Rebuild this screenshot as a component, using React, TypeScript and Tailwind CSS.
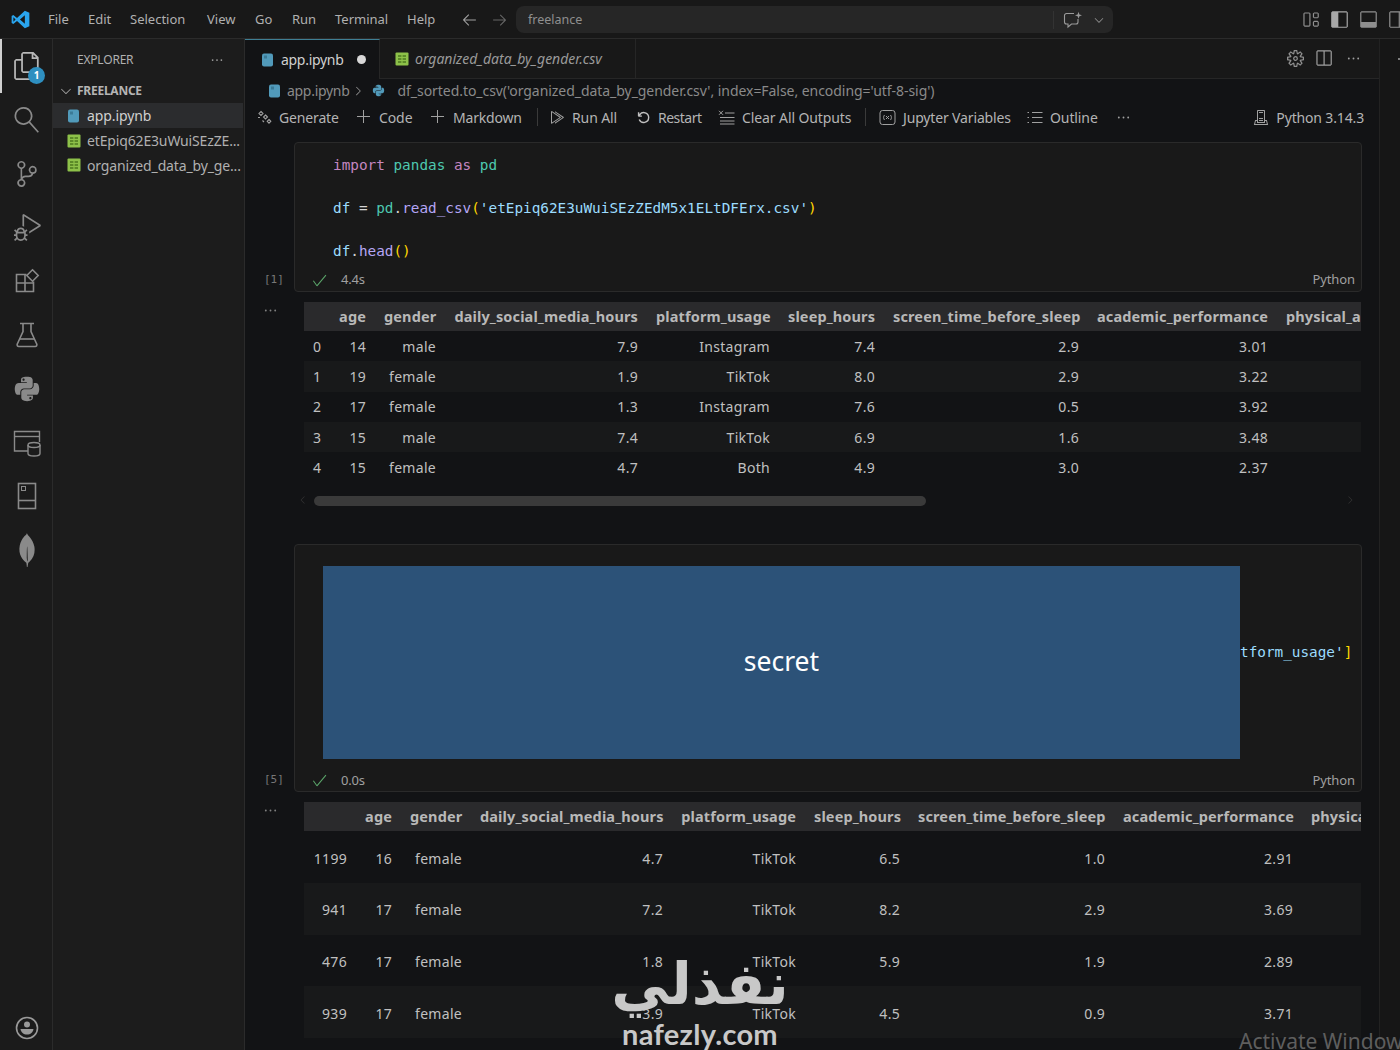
import React from "react";
import {
  VscFiles, VscSearch, VscSourceControl, VscDebugAlt, VscEllipsis, VscChevronDown,
  VscArrowLeft, VscArrowRight, VscAdd, VscRunAll, VscDebugRestart, VscSettingsGear, VscSplitHorizontal,
  VscLayout, VscLayoutSidebarLeft, VscLayoutPanel, VscLayoutSidebarRightOff, VscCheck, VscServerEnvironment,
  VscChevronLeft, VscChevronRight,
} from "react-icons/vsc";
import { FaPython } from "react-icons/fa";
import { SiMongodb } from "react-icons/si";

const ui = { fontFamily: '"Noto Sans", "Open Sans", sans-serif' };
const mono = { fontFamily: '"DejaVu Sans Mono", "Liberation Mono", monospace' };

function NotebookIcon({ size = 13 }: { size?: number }) {
  return (
    <svg width={size} height={size + 1} viewBox="0 0 13 14" className="shrink-0">
      <rect x="1" y="0.5" width="11" height="13" rx="2" fill="#519aba" />
      <rect x="3" y="2.5" width="3" height="3" fill="#3b7a96" />
    </svg>
  );
}

function CsvIcon() {
  return (
    <svg width="14" height="14" viewBox="0 0 14 14" className="shrink-0">
      <rect x="0.5" y="0.5" width="13" height="13" rx="1" fill="#8dc149" />
      <path d="M3 4h3.4M7.6 4H11M3 7h3.4M7.6 7H11M3 10h3.4M7.6 10H11" stroke="#5c8a29" strokeWidth="2" />
    </svg>
  );
}

function VsLogo() {
  return (
    <svg width="19" height="19" viewBox="0 0 24 24">
      <path d="M17.5 0.8 23.2 3.5V20.5L17.5 23.2 7.6 13.9 2.9 17.6 0.8 16.4V7.6L2.9 6.4 7.6 10.1ZM17.5 6.6 11.3 12 17.5 17.4ZM3 9.2V14.8L5.8 12Z" fill="#2aa5ee" />
    </svg>
  );
}

function ChatSparkle() {
  return (
    <svg width="20" height="18" viewBox="0 0 20 18" fill="none" stroke="#9a9a9a" strokeWidth="1.1">
      <path d="M11 2.5H3.5a2 2 0 0 0-2 2v6.5a2 2 0 0 0 2 2H5v3l3.5-3H13a2 2 0 0 0 2-2V8" />
      <path d="M15.5 0.8 16.4 3.4 19 4.3 16.4 5.2 15.5 7.8 14.6 5.2 12 4.3 14.6 3.4Z" fill="#9a9a9a" stroke="none" />
    </svg>
  );
}

const ic = "#8a8a8a";

function ExtIcon() {
  return (
    <svg width="26" height="26" viewBox="0 0 26 26" fill="none" stroke={ic} strokeWidth="1.6">
      <path d="M12.5 6.5H2.5V23.5H19.5V13.5M2.5 15H19.5M11 6.5V23.5" />
      <path d="M18.5 1.8 24.2 7.5 18.5 13.2 12.8 7.5Z" />
    </svg>
  );
}

function FlaskIcon() {
  return (
    <svg width="24" height="26" viewBox="0 0 24 26" fill="none" stroke={ic} strokeWidth="1.6">
      <path d="M5 1.5H19M8 1.5V9.5L2.3 22a1.7 1.7 0 0 0 1.6 2.5H20.1a1.7 1.7 0 0 0 1.6-2.5L16 9.5V1.5" />
      <path d="M4.8 17H19.2" />
    </svg>
  );
}

function DbWindow() {
  return (
    <svg width="28" height="28" viewBox="0 0 28 28" fill="none" stroke={ic} strokeWidth="1.4">
      <path d="M15 22H1.5V2.5H26.5V13" />
      <path d="M1.5 7.5H26.5" />
      <ellipse cx="21" cy="16" rx="6" ry="2.5" fill="#1b1b1b" />
      <path d="M15 16V24.5C15 26 18 27 21 27S27 26 27 24.5V16" />
    </svg>
  );
}

function BookIcon() {
  return (
    <svg width="20" height="28" viewBox="0 0 20 28" fill="none" stroke={ic} strokeWidth="1.6">
      <rect x="1.5" y="1.5" width="17" height="25" />
      <path d="M1.5 18.5H18.5" />
      <rect x="4.5" y="4.5" width="4" height="4" strokeWidth="1" />
    </svg>
  );
}

function AccountIcon() {
  return (
    <svg width="24" height="24" viewBox="0 0 24 24" fill="none">
      <circle cx="12" cy="12" r="10.5" stroke="#9a9a9a" strokeWidth="1.6" />
      <circle cx="12" cy="8.5" r="3" fill="#9a9a9a" />
      <path d="M5.5 13H18.5C18 16.5 15.5 18.5 12 18.5S6 16.5 5.5 13Z" fill="#9a9a9a" />
    </svg>
  );
}

function SparkDiamonds() {
  return (
    <svg width="15" height="15" viewBox="0 0 15 15" fill="none" stroke="#a0a0a0" strokeWidth="1.1">
      <path d="M4 1.5 6 3.5 4 5.5 2 3.5ZM8.5 5 10.5 7 8.5 9 6.5 7ZM12 9.5 13.8 11.3 12 13.1 10.2 11.3Z" />
      <path d="M1 7.5H3M5.5 10.5 7 12" />
    </svg>
  );
}

function ClearIcon() {
  return (
    <svg width="17" height="15" viewBox="0 0 17 15" fill="none" stroke="#a0a0a0" strokeWidth="1">
      <path d="M1 0.8 5 4.8M5 0.8 1 4.8M7 3H16.5M2 7.5H16.5M2 11H16.5M2 14H16.5" />
    </svg>
  );
}

function VarIcon() {
  return (
    <svg width="17" height="15" viewBox="0 0 17 15" fill="none" stroke="#a0a0a0" strokeWidth="1">
      <rect x="1" y="0.5" width="15" height="14" rx="2.5" />
      <path d="M5.5 5C4.3 6.5 4.3 8.5 5.5 10M11.5 5C12.7 6.5 12.7 8.5 11.5 10M7 6 10 9M10 6 7 9" />
    </svg>
  );
}

function OutlineIcon() {
  return (
    <svg width="16" height="13" viewBox="0 0 16 13" fill="none" stroke="#a0a0a0" strokeWidth="1.1">
      <path d="M0.5 1.5H2M0.5 6.5H2M0.5 11.5H2M5 1.5H15.5M5 6.5H15.5M5 11.5H15.5" />
    </svg>
  );
}

const activity: React.ReactNode[] = [
  <VscSearch size={26} color={ic} className="-scale-x-100" />,
  <VscSourceControl size={26} color={ic} />,
  <VscDebugAlt size={27} color={ic} />,
  <ExtIcon />,
  <FlaskIcon />,
  <FaPython size={28} color={ic} />,
  <DbWindow />,
  <BookIcon />,
  <SiMongodb size={34} color={ic} />,
];

function ActivityBar() {
  return (
    <div className="w-[53px] shrink-0 flex flex-col bg-[#1b1b1b] border-r border-[#2b2b2b]">
      <div className="h-[54px] flex items-center justify-center relative border-l-2 border-[#d0d0d0]">
        <VscFiles size={28} color="#b8b8b8" />
        <span className="absolute left-[26px] top-[28px] w-[17px] h-[17px] rounded-full bg-[#2e8fc0] text-white text-[10px] font-bold flex items-center justify-center">1</span>
      </div>
      {activity.map((a, i) => (
        <div key={i} className="h-[53.8px] pl-[2px] flex items-center justify-center">{a}</div>
      ))}
      <div className="mt-auto h-[34px] pl-[1px] flex items-start justify-center">
        <AccountIcon />
      </div>
    </div>
  );
}

function Sidebar() {
  return (
    <div className="w-[192px] shrink-0 bg-[#1c1c1c] border-r border-[#2b2b2b] flex flex-col">
      <div className="h-[40px] flex items-center pl-[24px] pr-[20px] pt-[1px] justify-between text-[12px] text-[#b0b0b0]">
        <span className="tracking-[-0.2px]">EXPLORER</span>
        <VscEllipsis size={14} color="#a0a0a0" />
      </div>
      <div className="h-[24px] flex items-center pl-[5px] text-[12px] font-bold text-[#b4b4b4]">
        <VscChevronDown size={16} color="#a0a0a0" />
        <span className="ml-[3px] tracking-[-0.25px]">FREELANCE</span>
      </div>
      <div className="h-[25px] flex items-center pl-[14px] bg-[#2b2c2e] mr-[1px] text-[14px] text-[#d0d0d0] gap-[7px] tracking-[-0.1px]">
        <NotebookIcon /> <span>app.ipynb</span>
      </div>
      <div className="h-[25px] flex items-center pl-[14px] text-[14px] text-[#b0b0b0] gap-[6px] tracking-[-0.15px] whitespace-nowrap overflow-hidden">
        <CsvIcon /> <span>etEpiq62E3uWuiSEzZE...</span>
      </div>
      <div className="h-[24px] flex items-center pl-[14px] text-[14px] text-[#b0b0b0] gap-[6px] tracking-[-0.15px] whitespace-nowrap overflow-hidden">
        <CsvIcon /> <span>organized_data_by_ge...</span>
      </div>
    </div>
  );
}

function ToolItem({ icon, label, w, t = "tracking-[-0.1px]" }: { icon: React.ReactNode; label: string; w: string; t?: string }) {
  return (
    <div className={`flex items-center gap-[7px] shrink-0 ${w}`}>
      <span className="shrink-0 flex items-center">{icon}</span>
      <span className={`whitespace-nowrap ${t}`}>{label}</span>
    </div>
  );
}

const tc = "#a0a0a0";

function Toolbar() {
  return (
    <div className="h-[26px] mt-[2px] flex items-center pl-[12px] text-[14px] text-[#b4b4b4]">
      <ToolItem w="w-[99px]" t="tracking-[-0.15px]" label="Generate" icon={<SparkDiamonds />} />
      <ToolItem w="w-[74px]" label="Code" icon={<VscAdd size={16} color={tc} />} />
      <ToolItem w="w-[107px]" t="tracking-[-0.2px]" label="Markdown" icon={<VscAdd size={16} color={tc} />} />
      <div className="w-[1px] h-[18px] bg-[#3a3a3a] mr-[11px]" />
      <ToolItem w="w-[87px]" label="Run All" icon={<VscRunAll size={16} color={tc} />} />
      <ToolItem w="w-[82px]" t="tracking-[-0.5px]" label="Restart" icon={<VscDebugRestart size={15} color="#c0c0c0" />} />
      <ToolItem w="w-[147px]" label="Clear All Outputs" icon={<ClearIcon />} />
      <div className="w-[1px] h-[18px] bg-[#3a3a3a] mr-[13px]" />
      <ToolItem w="w-[148px]" t="tracking-[-0.15px]" label="Jupyter Variables" icon={<VarIcon />} />
      <ToolItem w="w-[89px]" label="Outline" icon={<OutlineIcon />} />
      <VscEllipsis size={15} color={tc} />
      <div className="ml-auto mr-[15px]">
        <ToolItem w="w-auto" t="tracking-[-0.15px]" label="Python 3.14.3" icon={<VscServerEnvironment size={16} color={tc} />} />
      </div>
    </div>
  );
}

const C = ({ c, children }: { c: string; children: React.ReactNode }) => <span style={{ color: c }}>{children}</span>;

function Status({ n, t }: { n: string; t: string }) {
  return (
    <div className="flex h-[22px] items-center relative pl-[16px] pr-[6px] text-[13px] text-[#a0a0a0]">
      <span className="absolute left-[-31px] text-[11px] text-[#777]" style={mono}>{n}</span>
      <VscCheck size={17} color="#5aa469" />
      <span className="ml-[13px] tracking-[-0.2px]">{t}</span>
      <span className="ml-auto tracking-[-0.1px]">Python</span>
    </div>
  );
}

type Row = string[];
const head = ["", "age", "gender", "daily_social_media_hours", "platform_usage", "sleep_hours", "screen_time_before_sleep", "academic_performance", "physical_activity"];
const t1: Row[] = [
  ["0", "14", "male", "7.9", "Instagram", "7.4", "2.9", "3.01", ""],
  ["1", "19", "female", "1.9", "TikTok", "8.0", "2.9", "3.22", ""],
  ["2", "17", "female", "1.3", "Instagram", "7.6", "0.5", "3.92", ""],
  ["3", "15", "male", "7.4", "TikTok", "6.9", "1.6", "3.48", ""],
  ["4", "15", "female", "4.7", "Both", "4.9", "3.0", "2.37", ""],
];
const t2: Row[] = [
  ["1199", "16", "female", "4.7", "TikTok", "6.5", "1.0", "2.91", ""],
  ["941", "17", "female", "7.2", "TikTok", "8.2", "2.9", "3.69", ""],
  ["476", "17", "female", "1.8", "TikTok", "5.9", "1.9", "2.89", ""],
  ["939", "17", "female", "3.9", "TikTok", "4.5", "0.9", "3.71", ""],
];
const cols1 = ["w-[26px]", "w-[45px]", "w-[70px]", "w-[202px]", "w-[132px]", "w-[105px]", "w-[204px]", "w-[189px]", "w-[200px]"];
const cols2 = ["w-[52px]", "w-[45px]", "w-[70px]", "w-[201px]", "w-[133px]", "w-[104px]", "w-[205px]", "w-[188px]", "w-[200px]"];

function DataTable({ rows, cols, rowH, width, cell }: { rows: Row[]; cols: string[]; rowH: string; width: string; cell: string }) {
  return (
    <div className="ml-[10px] w-[1057px] overflow-hidden">
      <table className={`table-fixed border-collapse text-[14px] text-[#c0c0c0] tracking-[0.3px] ${width}`}>
        <colgroup>{cols.map((c, i) => <col key={i} className={c} />)}</colgroup>
        <thead>
          <tr className="h-[29px] bg-[#2a2a2c]">
            {head.map((h, i) => (
              <th key={i} className={`font-bold text-[14.5px] tracking-[0.13px] text-[#b8b8b8] whitespace-nowrap px-[9px] ${i === 8 ? "text-left" : "text-right"}`}>{h}</th>
            ))}
          </tr>
        </thead>
        <tbody>
          {rows.map((r, i) => (
            <tr key={i} className={`${rowH} ${i % 2 === 1 ? "bg-[#18191a]" : ""}`}>
              {r.map((v, j) => <td key={j} className={`text-right px-[9px] whitespace-nowrap ${cell}`}>{v}</td>)}
            </tr>
          ))}
        </tbody>
      </table>
    </div>
  );
}

export default function App() {
  return (
    <div className="w-[1400px] h-[1050px] overflow-hidden relative flex flex-col bg-[#181818] text-[#b0b0b0]" style={ui}>
      {/* title bar */}
      <div className="h-[39px] shrink-0 flex items-center bg-[#181818] border-b border-[#2b2b2b] text-[13px] pt-[1px]">
        <div className="w-[48px] pl-[11px] flex items-center"><VsLogo /></div>
        <span className="w-[40px]">File</span>
        <span className="w-[42px]">Edit</span>
        <span className="w-[77px]">Selection</span>
        <span className="w-[48px]">View</span>
        <span className="w-[37px]">Go</span>
        <span className="w-[43px]">Run</span>
        <span className="w-[72px]">Terminal</span>
        <span className="w-[54px]">Help</span>
        <VscArrowLeft size={17} color="#a0a0a0" />
        <VscArrowRight size={17} color="#666" className="ml-[13px]" />
        <div className="ml-[8px] w-[597px] h-[27px] rounded-[8px] bg-[#262626] flex items-center pl-[12px] pr-[6px] text-[#8f8f8f] text-[12.5px]">
          <span className="pt-[2px]">freelance</span>
          <div className="ml-auto w-[1px] h-[18px] bg-[#333] mr-[9px]" />
          <ChatSparkle />
          <VscChevronDown size={14} color="#909090" className="ml-[9px] mr-[1px]" />
        </div>
        <div className="ml-auto flex items-center gap-[10px] translate-x-[7px]">
          <VscLayout size={19} color="#8f8f8f" />
          <VscLayoutSidebarLeft size={19} color="#a8a8a8" />
          <VscLayoutPanel size={19} color="#8f8f8f" />
          <VscLayoutSidebarRightOff size={19} color="#8f8f8f" />
        </div>
      </div>

      <div className="flex-1 flex min-h-0">
        <ActivityBar />
        <Sidebar />

        {/* editor */}
        <div className="w-[1135px] shrink-0 flex flex-col bg-[#121315] min-h-0 border-r border-[#222]">
          {/* tabs */}
          <div className="h-[40px] shrink-0 flex bg-[#181818] border-b border-[#262626]">
            <div className="w-[135px] h-[40px] bg-[#121315] border-t border-[#3f7f94] border-r border-r-[#262626] flex items-center pl-[16px] text-[14px] text-[#d0d0d0] tracking-[-0.3px]">
              <NotebookIcon />
              <span className="ml-[7px]">app.ipynb</span>
              <span className="ml-auto mr-[13px] w-[9px] h-[9px] rounded-full bg-[#d8d8d8]" />
            </div>
            <div className="w-[256px] flex items-center pl-[15px] border-r border-[#262626] text-[14px] italic text-[#9a9a9a]">
              <CsvIcon />
              <span className="ml-[6px]">organized_data_by_gender.csv</span>
            </div>
            <div className="ml-auto flex items-center pr-[18px]">
              <VscSettingsGear size={17} color="#8f8f8f" />
              <VscSplitHorizontal size={19} color="#a0a0a0" className="ml-[10px]" />
              <VscEllipsis size={15} color="#a0a0a0" className="ml-[13px]" />
            </div>
          </div>

          {/* breadcrumb */}
          <div className="h-[23px] shrink-0 flex items-center pl-[23px] text-[14px] text-[#8a8a8a] whitespace-nowrap">
            <NotebookIcon />
            <span className="ml-[6px] tracking-[-0.3px]">app.ipynb</span>
            <VscChevronRight size={14} color="#909090" className="ml-[2px]" />
            <FaPython size={13} color="#519aba" className="ml-[7px]" />
            <span className="ml-[12px] tracking-[-0.05px]">df_sorted.to_csv('organized_data_by_gender.csv', index=False, encoding='utf-8-sig')</span>
          </div>

          <Toolbar />

          {/* notebook */}
          <div className="flex-1 min-h-0 overflow-hidden pt-[12px]">
            {/* cell 1 */}
            <div className="ml-[49px] w-[1068px] h-[150px] rounded-[4px] border border-[#2a2a2a] bg-[#191919] flex flex-col">
              <div className="flex-1 pl-[38px] pt-[12px] text-[14.35px] leading-[21.5px] whitespace-pre" style={mono}>
                <div><C c="#c586c0">import</C> <C c="#4ec9b0">pandas</C> <C c="#c586c0">as</C> <C c="#4ec9b0">pd</C></div>
                <div>&nbsp;</div>
                <div><C c="#9cdcfe">df</C> <C c="#d4d4d4">=</C> <C c="#4ec9b0">pd</C><C c="#d4d4d4">.</C><C c="#b5a6f5">read_csv</C><C c="#ffd700">(</C><C c="#9cdcfe">'etEpiq62E3uWuiSEzZEdM5x1ELtDFErx.csv'</C><C c="#ffd700">)</C></div>
                <div>&nbsp;</div>
                <div><C c="#9cdcfe">df</C><C c="#d4d4d4">.</C><C c="#b5a6f5">head</C><C c="#ffd700">()</C></div>
              </div>
              <Status n="[1]" t="4.4s" />
            </div>

            {/* output 1 */}
            <div className="mt-[10px] relative ml-[49px]">
              <VscEllipsis size={15} color="#808080" className="absolute left-[-31px] top-[1px]" />
              <DataTable rows={t1} cols={cols1} rowH="h-[30.3px]" width="w-[1173px]" cell="" />
              <div className="h-[36px] ml-[10px] w-[1057px] flex items-center relative">
                <VscChevronLeft size={12} color="#333" className="absolute left-[-7px] top-[12px]" />
                <div className="ml-[10px] mt-[1px] w-[612px] h-[10px] rounded-full bg-[#3a3a3a]" />
                <VscChevronRight size={12} color="#333" className="absolute right-[5px] top-[12px]" />
              </div>
            </div>

            {/* cell 2 */}
            <div className="mt-[26px] ml-[49px] w-[1068px] h-[248px] rounded-[4px] border border-[#2a2a2a] bg-[#191919] flex flex-col">
              <div className="flex-1 flex pl-[28px] pt-[21px]">
                <div className="w-[917px] h-[193px] bg-[#2c5278] flex items-center justify-center text-[26.5px] text-white pb-[2px]">secret</div>
                <div className="pt-[76px] text-[14.35px] leading-[21.5px] whitespace-pre" style={mono}>
                  <C c="#9cdcfe">tform_usage'</C><C c="#ffd700">]</C>
                </div>
              </div>
              <Status n="[5]" t="0.0s" />
            </div>

            {/* output 2 */}
            <div className="mt-[10px] relative ml-[49px]">
              <VscEllipsis size={15} color="#808080" className="absolute left-[-31px] top-[1px]" />
              <DataTable rows={t2} cols={cols2} rowH="h-[51.6px]" width="w-[1198px]" cell="pt-[2px]" />
            </div>
          </div>
        </div>

        {/* second pane */}
        <div className="flex-1 bg-[#161616] flex flex-col">
          <div className="h-[40px] flex items-center justify-end">
            <span className="w-[2px] h-[2px] rounded-full bg-[#a0a0a0]" />
          </div>
        </div>
      </div>

      {/* watermark */}
      <div className="absolute left-[600px] top-[950px] w-[200px] h-[100px] flex flex-col items-center text-[#c8c8c8] pointer-events-none">
        <div className="text-[58px] leading-[68px] font-bold whitespace-nowrap" dir="rtl" style={{ fontFamily: '"DejaVu Sans", sans-serif' }}>نفذلي</div>
        <div className="text-[29px] leading-[32px] font-bold tracking-[0.3px] whitespace-nowrap" style={{ fontFamily: 'Lato, sans-serif' }}>nafezly.com</div>
      </div>

      {/* activation notice */}
      <div className="absolute left-[1239px] top-[1026px] text-[21px] leading-[30px] text-[#5e5e5e] whitespace-nowrap">Activate Windows</div>
    </div>
  );
}
